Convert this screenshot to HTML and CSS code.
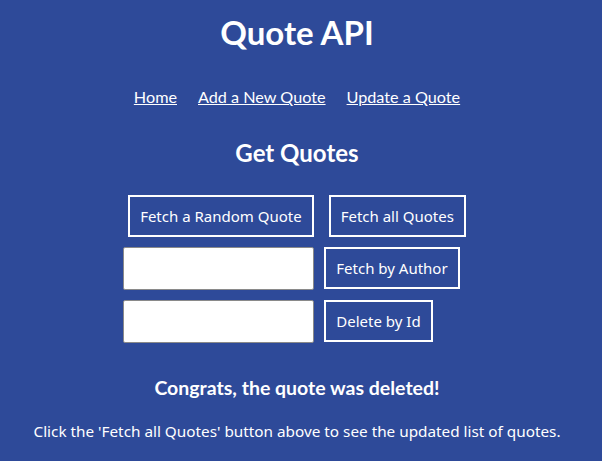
FILE: index.html
```html
<!DOCTYPE html>
<html>
<head>
<meta charset="utf-8">
<link rel="stylesheet" href="styles.css">
</head>
<body>
<div class="page">
  <h1 class="title">Quote API</h1>
  <nav class="nav">
    <a href="#">Home</a>
    <a href="#">Add a New Quote</a>
    <a href="#">Update a Quote</a>
  </nav>
  <h2 class="subtitle">Get Quotes</h2>
  <div class="row-top">
    <button class="btn">Fetch a Random Quote</button>
    <button class="btn">Fetch all Quotes</button>
  </div>
  <div class="form-grid">
    <input class="field" type="text">
    <button class="btn">Fetch by Author</button>
    <input class="field" type="text">
    <button class="btn">Delete by Id</button>
  </div>
  <h3 class="message">Congrats, the quote was deleted!</h3>
  <p class="note">Click the 'Fetch all Quotes' button above to see the updated list of quotes.</p>
</div>
</body>
</html>
```
FILE: styles.css
```css
html, body {
  margin: 0;
  padding: 0;
  background: #2e4a99;
  color: #ffffff;
  font-family: "Lato", "Noto Sans", sans-serif;
}
.page {
  display: flex;
  flex-direction: column;
  align-items: center;
  padding-right: 8px;
}
.title {
  margin: 12px 0 0;
  font-size: 33px;
  font-weight: 700;
  line-height: 40px;
}
.nav {
  display: flex;
  gap: 21px;
  margin-top: 35px;
  font-size: 16.2px;
  line-height: 20px;
}
.nav a {
  color: #ffffff;
  text-decoration: underline;
}
.subtitle {
  margin: 31px 0 0;
  font-size: 24px;
  font-weight: 700;
  line-height: 30px;
}
.row-top {
  display: flex;
  gap: 15px;
  margin-top: 27px;
}
.btn {
  background: transparent;
  color: #ffffff;
  border: 2px solid #ffffff;
  border-radius: 0;
  height: 42px;
  padding: 0 10px;
  font-family: "Noto Sans", sans-serif;
  font-size: 15px;
}
.btn-wide {
  padding: 0 12px;
}
.form-grid {
  display: grid;
  grid-template-columns: 191px auto;
  justify-items: start;
  column-gap: 10px;
  row-gap: 10px;
  margin-top: 10px;
  margin-right: 11px;
}
.field {
  box-sizing: border-box;
  width: 191px;
  height: 43px;
  border: 1px solid #8a8a8a;
  border-radius: 2px;
  background: #ffffff;
  margin: 0;
}
.message {
  margin: 32px 0 0;
  font-size: 19.5px;
  font-weight: 700;
  line-height: 26px;
}
.note {
  margin: 20px 0 0;
  font-size: 15.3px;
  line-height: 20px;
  font-family: "Noto Sans", sans-serif;
}
```
